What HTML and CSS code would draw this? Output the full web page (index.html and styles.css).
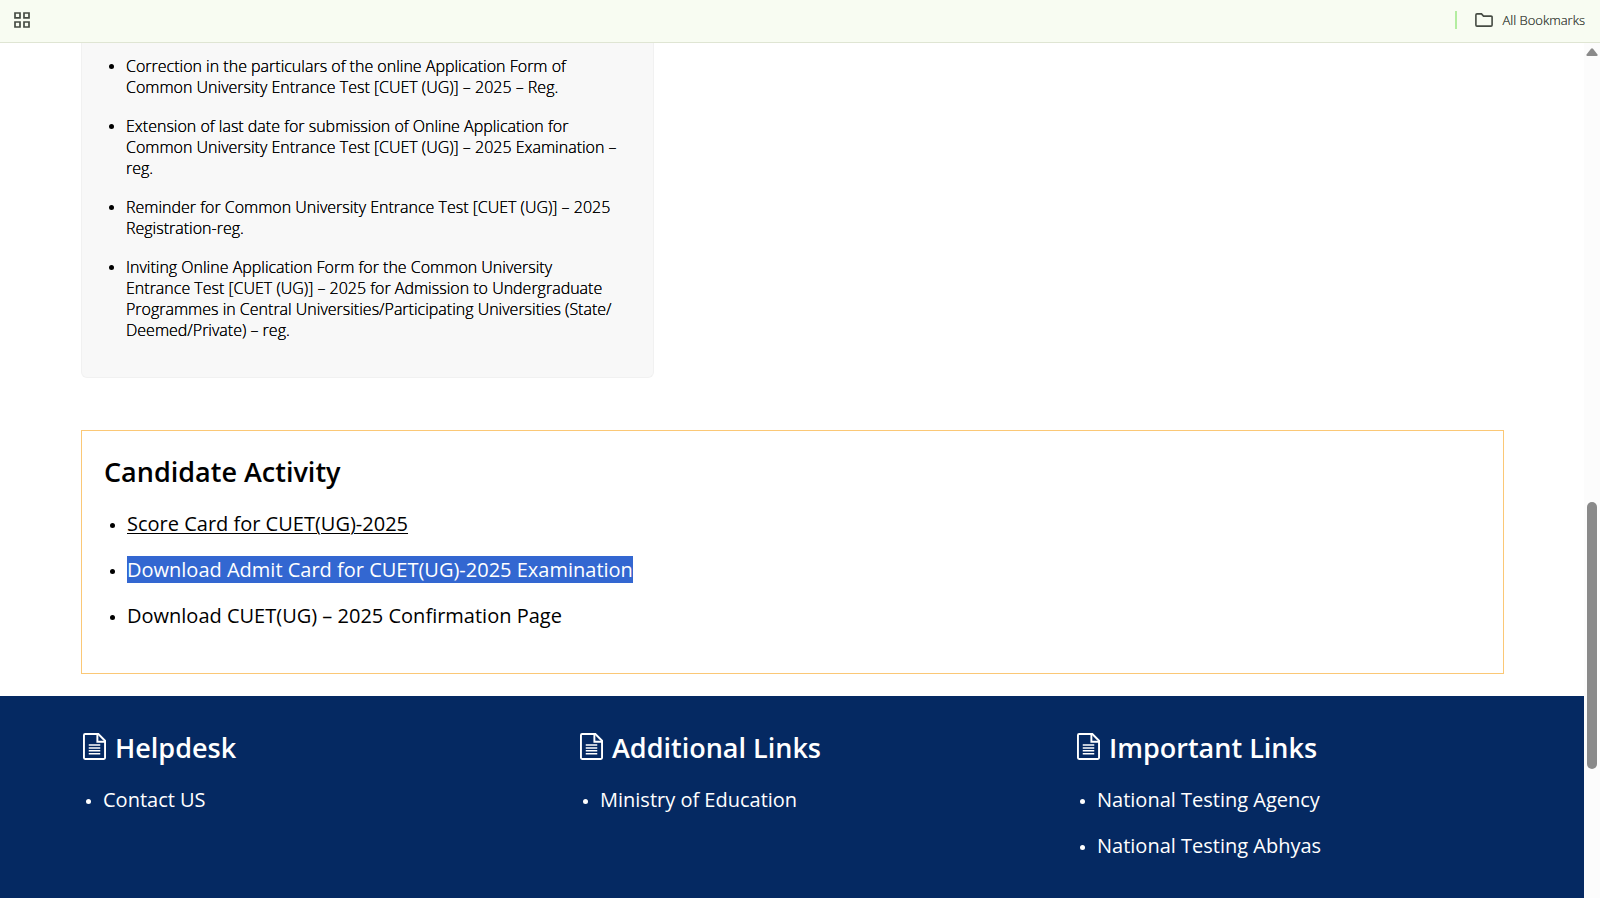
FILE: index.html
```html
<!DOCTYPE html>
<html lang="en">
<head>
<meta charset="utf-8">
<title>CUET (UG) 2025</title>
<link rel="stylesheet" href="styles.css">
</head>
<body>
<svg class="sprite" aria-hidden="true">
  <symbol id="file-icon" viewBox="0 0 24 28">
    <path d="M1 2.2Q1 1 2.2 1H16L23 8V25.8Q23 27 21.8 27H2.2Q1 27 1 25.8Z" fill="none" stroke="currentColor" stroke-width="2"/>
    <path d="M15 1V9H23" fill="none" stroke="currentColor" stroke-width="2"/>
    <path d="M6 12.500H18M6 15.500H18M6 18.500H18M6 21.500H18" fill="none" stroke="currentColor" stroke-width="1.600"/>
  </symbol>
</svg>
<header class="bookmarks">
  <button class="apps" aria-label="Apps">
    <svg width="16" height="16" viewBox="0 0 16 16" fill="none" stroke="currentColor" stroke-width="1.700"><path d="M1 1h5v4.800H1zM10 1h5v4.800h-5zM1 10h5v5H1zM10 10h5v5h-5z"/></svg>
  </button>
  <button class="all">
    <svg width="18" height="14" viewBox="0 0 18 14" fill="none" stroke="currentColor" stroke-width="1.600"><path d="M2 .9h4.500l2 2.200H16Q17.100 3.100 17.100 4.200V12Q17.100 13.100 16 13.100H2Q.9 13.100 .9 12V2Q.9 .9 2 .9z"/></svg>
    <span>All Bookmarks</span>
  </button>
</header>
<div class="viewport">
  <div class="page">
    <main class="content">
      <section class="notices">
        <ul>
          <li><a href="#">Correction in the particulars of the online Application Form of Common University Entrance Test [CUET (UG)] – 2025 – Reg.</a></li>
          <li><a href="#">Extension of last date for submission of Online Application for Common University Entrance Test [CUET (UG)] – 2025 Examination – reg.</a></li>
          <li><a href="#">Reminder for Common University Entrance Test [CUET (UG)] – 2025 Registration-reg.</a></li>
          <li><a href="#">Inviting Online Application Form for the Common University<br>Entrance Test [CUET (UG)] – 2025 for Admission to Undergraduate Programmes in Central Universities/Participating Universities (State/<br>Deemed/Private) – reg.</a></li>
        </ul>
      </section>
      <section class="activity">
        <h2>Candidate Activity</h2>
        <ul class="links">
          <li><a class="hovered" href="#">Score Card for CUET(UG)-2025</a></li>
          <li><a class="selected" href="#">Download Admit Card for CUET(UG)-2025 Examination</a></li>
          <li><a href="#">Download CUET(UG) – 2025 Confirmation Page</a></li>
        </ul>
      </section>
    </main>
    <footer class="footer">
      <section>
        <h2><svg class="file"><use href="#file-icon"/></svg>Helpdesk</h2>
        <ul class="links"><li><a href="#">Contact US</a></li></ul>
      </section>
      <section>
        <h2><svg class="file"><use href="#file-icon"/></svg>Additional Links</h2>
        <ul class="links"><li><a href="#">Ministry of Education</a></li></ul>
      </section>
      <section>
        <h2><svg class="file"><use href="#file-icon"/></svg>Important Links</h2>
        <ul class="links"><li><a href="#">National Testing Agency</a></li><li><a href="#">National Testing Abhyas</a></li></ul>
      </section>
    </footer>
  </div>
  <div class="scrollbar" aria-hidden="true">
    <svg width="12" height="8" viewBox="0 0 12 8" fill="#8a8a8a"><path d="M5 .8Q6-.4 7 .8L11.500 6.600Q12 8 10.500 8h-9Q0 8 .5 6.600z"/></svg>
    <div class="thumb"></div>
  </div>
</div>
</body>
</html>
```
FILE: styles.css
```css
* { box-sizing: border-box; }

body {
  margin: 0;
  height: 100vh;
  display: flex;
  flex-direction: column;
  overflow: hidden;
  background: #fff;
  color: #000;
  font-family: "Open Sans", "Noto Sans", sans-serif;
}

a { color: inherit; text-decoration: none; }
h2, ul { margin: 0; padding: 0; }
button { border: 0; padding: 0; background: none; color: #454b43; font: inherit; }
.sprite { position: absolute; width: 0; height: 0; }

.bookmarks {
  flex: none;
  display: flex;
  align-items: center;
  justify-content: space-between;
  height: 43px;
  padding: 0 15px 3px 14px;
  border-bottom: 1px solid #dfe5d3;
  background: #f8fcf2;
}
.bookmarks svg { display: block; }
.all {
  display: flex;
  align-items: center;
  gap: 9px;
  height: 18px;
  padding-left: 18px;
  border-left: 2px solid #b3eda0;
  font-size: 13px;
  font-weight: 300;
  text-shadow: 0 0 0 currentColor;
  color: #454b43;
}

.viewport { flex: 1; min-height: 0; display: flex; }
.page { flex: 1; display: flex; flex-direction: column; }
.content { padding: 0 80px 22px 81px; }

.notices {
  width: 573px;
  padding: 13px 24px 36px 44px;
  border: 1px solid #f1f1f1;
  border-top: 0;
  border-radius: 0 0 6px 6px;
  background: #f8f8f8;
  font-size: 16px;
  font-weight: 300;
  line-height: 21px;
  text-shadow: 0 0 0 currentColor;
}
.notices li + li { margin-top: 18px; }
.notices li::marker { font-size: 14px; }

.activity {
  margin-top: 52px;
  padding: 21px 22px 25px;
  border: 1px solid #fbc876;
}
h2 { font-size: 27px; line-height: 40px; font-weight: 600; }
.links { padding-left: 23px; font-size: 20px; line-height: 28px; }
.links li { margin: 18px 0; }
.links li::marker { font-size: 14px; }
.hovered { text-decoration: underline; text-underline-offset: 2px; text-decoration-thickness: 1px; }
.selected { background: #3367d1; color: #fff; }

.footer {
  flex: 1;
  display: grid;
  grid-template-columns: repeat(3, 1fr);
  gap: 67px;
  padding: 32px 80px;
  background: #052962;
  color: #fff;
}
.footer h2 { display: flex; gap: 9px; }
.file { width: 23px; height: 27px; margin: 5px 0 0 3px; }

.scrollbar {
  width: 16px;
  padding-top: 5px;
  display: flex;
  flex-direction: column;
  align-items: center;
  background: #fcfcfc;
}
.thumb {
  width: 10px;
  height: 267px;
  margin-top: 446px;
  border-radius: 5px;
  background: #8a8a8a;
}
```
